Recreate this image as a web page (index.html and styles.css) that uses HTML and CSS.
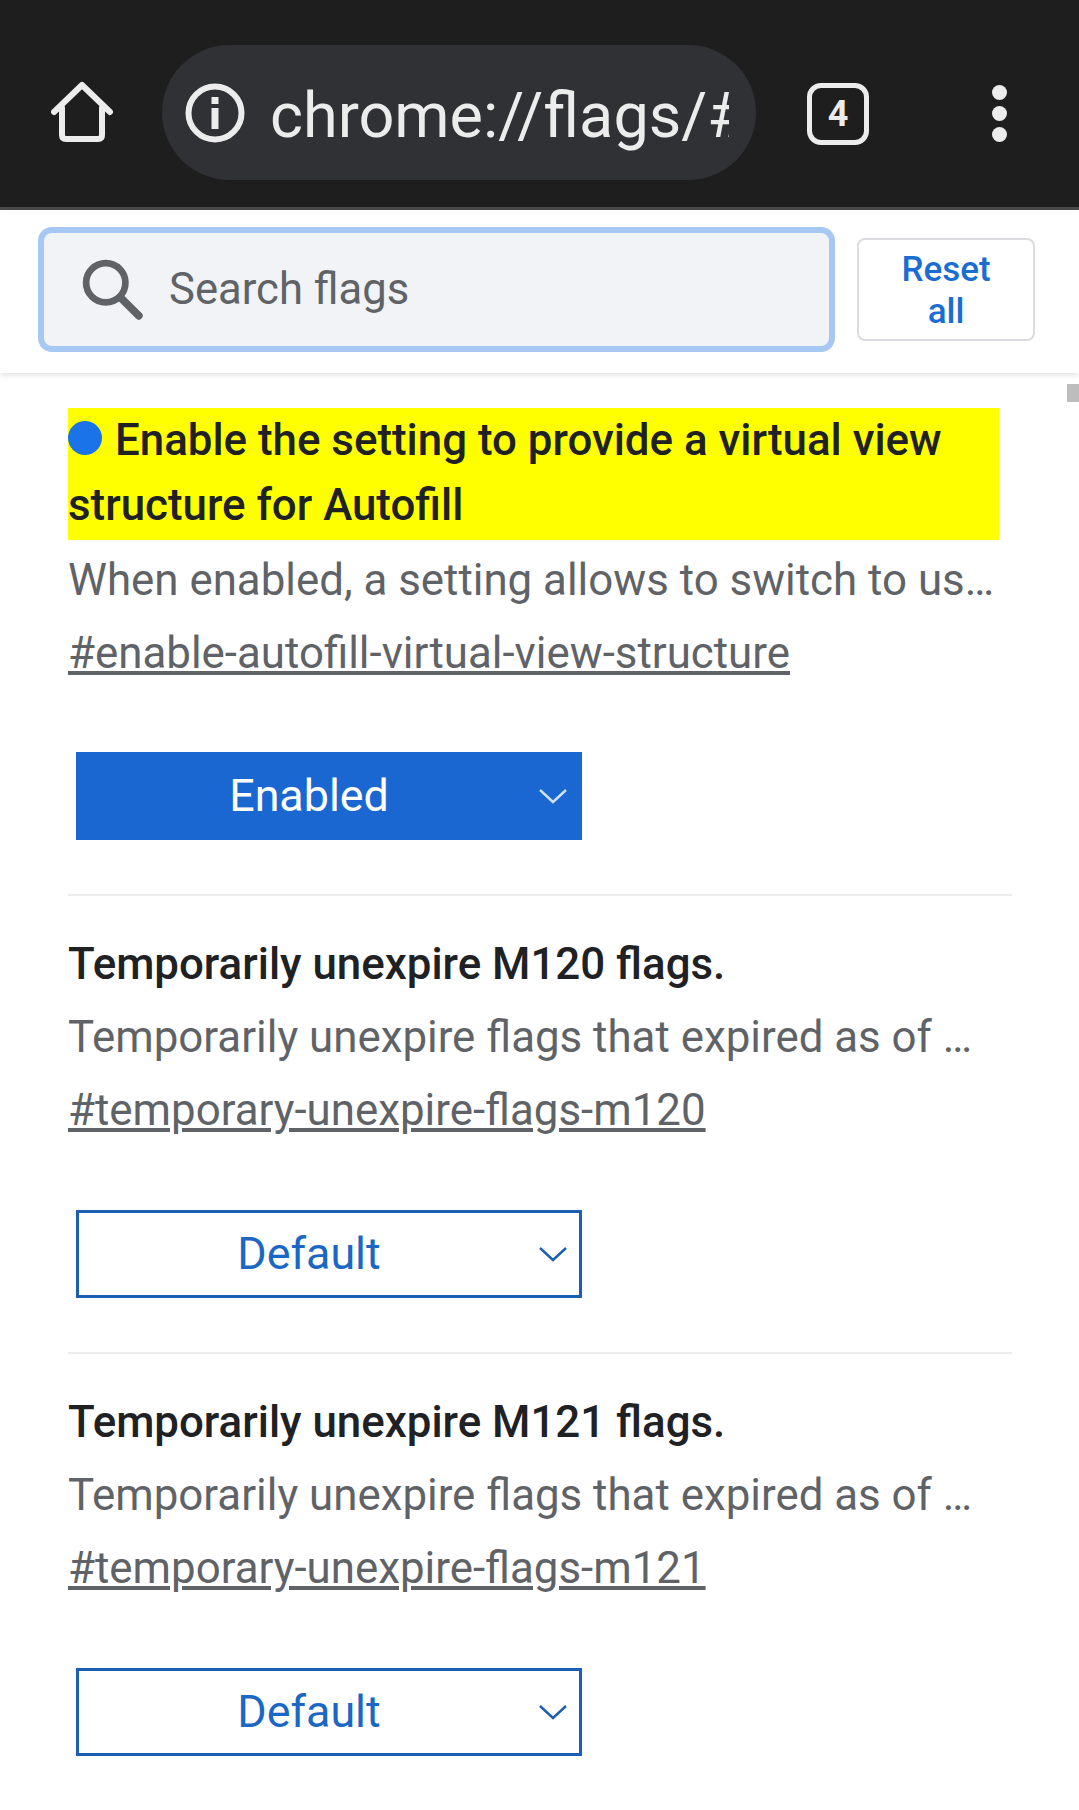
FILE: index.html
```html
<!DOCTYPE html>
<html lang="en">
<head>
    <meta charset="UTF-8">
    <meta name="viewport" content="width=device-width, initial-scale=1.0">
    <title>chrome://flags</title>
    <link rel="stylesheet" href="styles.css">
</head>
<body>
    <div class="toolbar">
        <svg class="home-icon" viewBox="0 0 62 62" fill="none" stroke="#ececec" stroke-width="6" stroke-linecap="round" stroke-linejoin="round">
            <path d="M3 31 L31 4 L59 31"/>
            <path d="M11 27 V54 Q11 58 15 58 H47 Q51 58 51 54 V27"/>
        </svg>
        <div class="omnibox">
            <svg class="info-icon" viewBox="0 0 60 60" fill="none">
                <circle cx="30" cy="30" r="26.5" stroke="#ececec" stroke-width="6"/>
                <rect x="26.5" y="14" width="7" height="7" fill="#ececec"/>
                <rect x="26.5" y="25" width="7" height="21" fill="#ececec"/>
            </svg>
            <span class="url">chrome://flags/#</span>
        </div>
        <div class="tab-count">4</div>
        <div class="menu-dots"><i></i><i></i><i></i></div>
    </div>

    <div class="search-header">
        <div class="search-box">
            <svg class="search-icon" viewBox="0 0 60 60" fill="none" stroke="#5f6368">
                <circle cx="23" cy="23" r="19" stroke-width="6.5"/>
                <path d="M37 37 L55 55" stroke-width="7.5" stroke-linecap="round"/>
            </svg>
            <span class="search-placeholder">Search flags</span>
        </div>
        <div class="reset-btn">Reset all</div>
    </div>
    <div class="scroll-thumb"></div>

    <div class="experiments">
        <div class="experiment first">
            <h2 class="flag-title highlighted"><span class="dot"></span>Enable the setting to provide a virtual view structure for Autofill</h2>
            <p class="flag-desc">When enabled, a setting allows to switch to using a virtual view structure</p>
            <a class="flag-link" href="#enable-autofill-virtual-view-structure">#enable-autofill-virtual-view-structure</a>
            <div class="flag-select enabled">
                <span>Enabled</span>
                <svg class="chevron" viewBox="0 0 28 16" fill="none" stroke="#cfe2fb" stroke-width="2.4"><path d="M1 2 L14 14 L27 2"/></svg>
            </div>
        </div>
        <div class="experiment">
            <h2 class="flag-title">Temporarily unexpire M120 flags.</h2>
            <p class="flag-desc">Temporarily unexpire flags that expired as of M120. At some point</p>
            <a class="flag-link" href="#temporary-unexpire-flags-m120">#temporary-unexpire-flags-m120</a>
            <div class="flag-select">
                <span>Default</span>
                <svg class="chevron" viewBox="0 0 28 16" fill="none" stroke="#1a5fb4" stroke-width="2.4"><path d="M1 2 L14 14 L27 2"/></svg>
            </div>
        </div>
        <div class="experiment">
            <h2 class="flag-title">Temporarily unexpire M121 flags.</h2>
            <p class="flag-desc">Temporarily unexpire flags that expired as of M121. At some point</p>
            <a class="flag-link" href="#temporary-unexpire-flags-m121">#temporary-unexpire-flags-m121</a>
            <div class="flag-select">
                <span>Default</span>
                <svg class="chevron" viewBox="0 0 28 16" fill="none" stroke="#1a5fb4" stroke-width="2.4"><path d="M1 2 L14 14 L27 2"/></svg>
            </div>
        </div>
    </div>
</body>
</html>
```

FILE: styles.css
```css
html, body { margin: 0; padding: 0; height: 1810px; overflow: hidden; background: #fff; }
body { font-family: Roboto, "Liberation Sans", sans-serif; }

/* browser toolbar */
.toolbar { height: 210px; box-sizing: border-box; background: #1e1e1e; border-bottom: 3px solid #4a4a4a; display: flex; align-items: flex-start; padding-top: 45px; }
.home-icon { width: 62px; height: 62px; margin: 36px 0 0 51px; flex: none; }
.omnibox { width: 594px; height: 135px; margin-left: 49px; background: #303134; border-radius: 68px; display: flex; align-items: center; flex: none; }
.info-icon { width: 60px; height: 60px; margin-left: 23px; flex: none; }
.url { width: 459px; margin-left: 25px; padding-top: 6px; overflow: hidden; white-space: nowrap; color: #ececec; font-size: 63px; line-height: 80px; }
.tab-count { width: 52px; height: 52px; margin: 38px 0 0 51px; border: 5.5px solid #ececec; border-radius: 14px; color: #ececec; font-size: 36px; font-weight: 700; line-height: 52px; text-align: center; flex: none; }
.menu-dots { margin: 40px 0 0 123px; display: flex; flex-direction: column; gap: 6px; }
.menu-dots i { display: block; width: 15px; height: 15px; background: #ececec; border-radius: 50%; }

/* search header */
.search-header { height: 163px; box-sizing: border-box; padding: 0 44px 4px 38px; background: #fff; box-shadow: 0 2px 6px rgba(0,0,0,0.12); display: flex; align-items: center; gap: 22px; position: relative; }
.search-box { flex: 1; height: 125px; box-sizing: border-box; background: #f1f3f6; border: 6px solid #a6c8f3; border-radius: 14px; display: flex; align-items: center; }
.search-icon { width: 62px; height: 62px; margin: 0 0 0 38px; flex: none; }
.search-placeholder { margin-left: 25px; color: #5f6368; font-size: 43.6px; }
.reset-btn { width: 178px; height: 103px; box-sizing: border-box; border: 2px solid #dadce0; border-radius: 8px; color: #1a6ed2; font-size: 35px; font-weight: 500; line-height: 42px; text-align: center; padding: 9px 40px; }
.scroll-thumb { position: absolute; right: 0; top: 384px; width: 12px; height: 18px; background: #bdbdbd; }

/* flag list */
.experiments { padding: 35px 0 0 68px; width: 944px; }
.experiment { height: 458px; box-sizing: border-box; border-bottom: 2px solid #ececec; }
.experiment:last-child { border-bottom: none; }
.experiment.first { height: 488px; }
.experiment:not(.first) { padding-top: 35px; }
.flag-title { margin: 0; color: #202124; font-size: 43.85px; font-weight: 500; line-height: 66px; }
.highlighted { background: #ff0; width: 931px; line-height: 65px; padding-bottom: 2px; }
.dot { display: inline-block; width: 34px; height: 34px; margin-right: 13px; background: #1a73e8; border-radius: 50%; vertical-align: 0; }
.flag-desc { margin: 8px 0 0; width: 931px; color: #5f6368; font-size: 43.85px; line-height: 64px; white-space: nowrap; overflow: hidden; text-overflow: ellipsis; }
.flag-link { display: inline-block; margin-top: 9px; color: #5f6368; font-size: 43.85px; line-height: 64px; text-decoration: underline; }
.flag-select { width: 506px; height: 88px; box-sizing: border-box; margin: 68px 0 0 8px; border: 3px solid #1a5fb4; color: #1a67c4; font-size: 44.8px; position: relative; display: flex; align-items: center; justify-content: center; padding: 0 40px 2px 0; }
.flag-select.enabled { margin-top: 67px; background: #1a67d2; border-color: #1a67d2; color: #fff; }
.chevron { position: absolute; right: 12px; top: 33px; width: 28px; height: 16px; }
```
